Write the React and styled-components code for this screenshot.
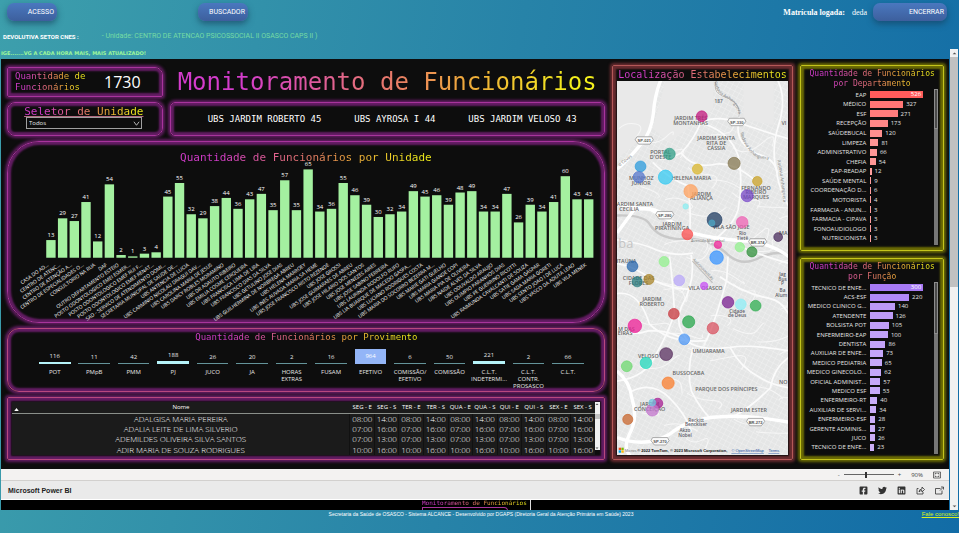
import React from "react";
import styled, { createGlobalStyle } from "styled-components";
import { FaFacebookSquare, FaLinkedin, FaTwitter } from "react-icons/fa";

const SANS = '"Liberation Sans", Arial, sans-serif';
const CONDENSED = 'Roboto, "Liberation Sans", sans-serif';
const UI = '"Open Sans", "Noto Sans", sans-serif';
const MONO = '"DejaVu Sans Mono", monospace';

const GlobalStyle = createGlobalStyle`
  * { box-sizing: border-box; }
  html, body { margin: 0; }
  body {
    min-height: 100vh;
    font-family: ${SANS};
    background: linear-gradient(100deg, #3d9fac 0%, #2783a8 50%, #126ca6 100%);
  }
  button { font: inherit; border: 0; padding: 0; }
`;

const Page = styled.div`
  display: flex;
  flex-direction: column;
  min-height: 100vh;
`;

/* ---------- site header ---------- */

const TopBar = styled.header`
  display: flex;
  align-items: center;
  height: 29px;
  padding: 0 12px 5px 7px;
`;

const PillButton = styled.button`
  width: ${(p) => p.$width}px;
  height: 18px;
  padding-right: 3px;
  border-radius: 7px;
  background: linear-gradient(#4a78bf, #3d5f9d);
  box-shadow: 0 3px 6px rgba(20, 60, 90, 0.6);
  color: #fff;
  font: 7px ${CONDENSED};
  text-align: right;
  cursor: pointer;
`;

const Actions = styled.nav`
  display: flex;
  flex: 1;
  gap: 141px;
`;

const LoggedUser = styled.p`
  display: flex;
  gap: 7px;
  margin: 0 6px 0 0;
  color: #fff;
  font: 8px "Liberation Serif", serif;
`;

const SectorLine = styled.p`
  display: flex;
  align-items: center;
  gap: 23px;
  height: 14px;
  margin: 0;
  padding-left: 3px;
  color: #76dca4;
  font: 7px ${CONDENSED};

  strong { color: #fff; font-size: 6px; }
`;

/* ---------- embedded report ---------- */

const FrameRow = styled.main`
  display: flex;
  margin: 6px 0 0 1px;
`;

const Frame = styled.div`
  flex: 1;
  min-width: 0;
`;

const Ticker = styled.p`
  height: 10px;
  margin: 0;
  color: #9df79a;
  font: bold 5px/8px "DejaVu Sans", sans-serif;
  white-space: nowrap;
  overflow: hidden;
`;

const Report = styled.section`
  display: grid;
  grid-template-columns: 599fr 182fr 144fr;
  gap: 7px;
  padding: 6px 5px 9px 6px;
  background: #0d0d0d;
  color: #e6e6e6;
  font-family: ${UI};
`;

const tones = {
  purple: ["#a8349c", "#641c64"],
  pink: ["#b8487e", "#641c64"],
  red: ["#b45858", "#6a2c30"],
  yellow: ["#c4c41c", "#6c6c04"],
};

const Panel = styled.section`
  display: flex;
  min-width: 0;
  min-height: ${(p) => p.$minHeight || 0}px;
  flex-direction: column;
  border: 1px solid ${(p) => tones[p.$tone][0]};
  border-radius: ${(p) => p.$radius || "2px"};
  box-shadow: 0 0 3px 2px ${(p) => tones[p.$tone][1]},
    inset 0 0 2px 3px ${(p) => tones[p.$tone][1]};
`;

const GradientText = styled.h2`
  width: fit-content;
  margin: 0;
  background: linear-gradient(90deg, #d43ccc 15%, #e8786c 50%, #efa83c 68%, #f4f01c 95%);
  background-clip: text;
  color: transparent;
  font: ${(p) => p.$size}px/${(p) => p.$line || p.$size + 2}px ${MONO};
  text-align: center;
  white-space: nowrap;
`;

const LeftColumn = styled.div`
  display: flex;
  flex-direction: column;
  gap: 5px;
  min-width: 0;
  padding-top: 2px;
`;

const Summary = styled.div`
  display: grid;
  grid-template-columns: 156fr 436fr;
  gap: 5px 7px;
`;

const TotalPanel = styled(Panel)`
  flex-direction: row;
  align-items: center;
  justify-content: space-between;
  padding: 0 21px 0 7px;

  h2 { text-align: left; }
`;

const Total = styled.strong`
  color: #fff;
  font-size: 16px;
  font-weight: 400;
`;

const MainTitle = styled(GradientText)`
  align-self: center;
  justify-self: center;
`;

const SelectorPanel = styled(Panel)`
  align-items: center;
  padding: 3px 20px 0 18px;

  label { text-decoration: underline #b06a80; }
`;

const SelectWrap = styled.div`
  display: grid;
  width: 100%;
  align-items: center;

  > * { grid-area: 1 / 1; }
  svg { justify-self: end; width: 7px; height: 7px; margin-right: 2px; pointer-events: none; }
`;

const UnitSelect = styled.select`
  appearance: none;
  width: 100%;
  height: 12px;
  padding: 0 2px;
  border: 1px solid #a0a0a0;
  border-radius: 0;
  background: #0d0d0d;
  color: #e6e6e6;
  font: 6px ${UI};
`;

const UnitTicker = styled(Panel)`
  flex-direction: row;
  align-items: center;
  justify-content: space-between;
  padding: 0 27px 0 37px;
  color: #fff;
  font: 9px ${MONO};
`;

const ChartPanel = styled(Panel)`
  display: grid;

  > * { grid-area: 1 / 1; }
  > h2 { justify-self: center; margin-top: 9px; }
  > svg { display: block; width: 100%; height: auto; font-family: ${UI}; }
`;

const ProvisionPanel = styled(Panel)`
  align-items: center;
  padding: 2px 16px 0 27px;
`;

const ProvisionTitle = styled(GradientText)`
  margin-right: 10px;
`;

const ProvisionGrid = styled.div`
  display: grid;
  grid-template-columns: repeat(14, 1fr);
  width: 100%;
`;

const Provision = styled.div`
  display: flex;
  flex-direction: column;
  align-items: center;
  font-size: 6px;
  line-height: 7px;
  text-align: center;
`;

const ProvisionPlot = styled.div`
  display: flex;
  width: 100%;
  height: 21px;
  flex-direction: column;
  justify-content: flex-end;
  align-items: center;
  gap: 2px;
`;

const ProvisionBar = styled.span`
  display: grid;
  place-items: center;
  width: 80%;
  background: ${(p) => (p.$tone === "full" ? "#93b5f7" : p.$tone === "light" ? "#b5f2f8" : "#64949a")};
  color: #fff;
`;

const ProvisionName = styled.span`
  width: 36px;
  margin-top: 5px;
`;

const TablePanel = styled(Panel)`
  flex-direction: row;
  align-items: stretch;
  padding: 4px;
`;

const Schedule = styled.table`
  flex: 1;
  border-collapse: collapse;
  table-layout: fixed;
  background: #1b1b1b;
  color: #fff;
  font-size: 8px;
  font-weight: 300;
  text-align: center;

  th {
    height: 12px;
    padding: 0;
    border-bottom: 1px solid #8a8f8a;
    font-size: 6px;
    font-weight: 400;
    line-height: 8px;
  }
  th:first-child { width: 58%; }
  td { height: 10px; padding: 0; line-height: 10px; }
  td + td { border-left: 1px solid #111; }
`;

const NameHead = styled.div`
  display: grid;
  grid-template-columns: 8px 1fr 8px;
  align-items: end;

  svg { width: 5px; margin-left: 2px; }
`;

const MiniScroll = styled.div`
  display: flex;
  flex-direction: column;
  justify-content: space-between;
  align-items: center;
  width: 5px;
  margin-bottom: 5px;
  background: linear-gradient(#f1f1f1 12px, #c1c1c1 12px, #c1c1c1 17px, #f1f1f1 17px);

  svg { width: 4px; }
`;

const MapPanel = styled(Panel)`
  padding: 3px 4px 4px;
  align-items: center;

  svg { display: block; width: 100%; height: 374px; }
`;

const RightColumn = styled.div`
  display: flex;
  flex-direction: column;
  gap: 7px;
  min-width: 0;
`;

const RankPanel = styled(Panel)`
  align-items: center;
  padding: 3px 5px 5px;
`;

const RankBody = styled.div`
  display: flex;
  width: 100%;
  height: ${(p) => p.$height}px;
`;

const RankRows = styled.ol`
  display: flex;
  flex: 1;
  flex-direction: column;
  margin: 0;
  padding: 1px 0 2px;
  list-style: none;
`;

const RankRow = styled.li`
  display: grid;
  flex: 1;
  grid-template-columns: 60px 1fr;
  gap: 4px;
  align-items: center;
  min-height: 0;
  font-size: 6px;
  line-height: 8px;
  text-align: right;
  white-space: nowrap;
`;

const RankMeter = styled.span`
  display: flex;
  align-items: center;
  gap: 3px;
`;

const RankBar = styled.span`
  height: 7px;
  padding-right: ${(p) => (p.$labelled ? 2 : 0)}px;
  background: ${(p) => p.$color};
  color: #fff;
  line-height: 7px;
`;

const RankTrack = styled.div`
  width: 4px;
  background: #767676;

  &::before {
    content: "";
    display: block;
    height: ${(p) => p.$thumb}px;
    border: 1px solid #8c8c8c;
    background: #4a4a4a;
  }
`;

const StatusBar = styled.div`
  display: flex;
  align-items: center;
  justify-content: flex-end;
  gap: 4px;
  height: 12px;
  padding-right: 8px;
  border-bottom: 1px solid #d2d0ce;
  background: #f3f2f1;
  color: #444;
  font: 6px ${UI};

  svg { width: 8px; height: 8px; margin-left: 6px; }
  output { margin-left: 6px; }
`;

const ZoomRange = styled.input`
  appearance: none;
  width: 50px;
  height: 7px;
  margin: 0;
  background: linear-gradient(#666, #666) center / 100% 1px no-repeat;

  &::-webkit-slider-thumb { appearance: none; width: 2px; height: 6px; background: #333; }
`;

const BrandBar = styled.div`
  display: flex;
  align-items: center;
  justify-content: space-between;
  height: 18px;
  padding: 0 5px 0 7px;
  background: #eaeaea;
  color: #222;
  font: bold 7px ${SANS};
`;

const ShareList = styled.div`
  display: flex;
  gap: 10px;

  button { display: grid; width: 9px; height: 9px; background: none; color: #333; }
  svg { width: 9px; height: 9px; }
`;

const NextReport = styled.div`
  display: flex;
  justify-content: center;
  height: 11px;
  border-top: 1px solid #fff;
  background: #000;
`;

const Preview = styled.div`
  width: 112px;
  padding-left: 3px;
  border-right: 1px solid #ddd;
  overflow: hidden;
`;

const PreviewBox = styled.div`
  height: 4px;
  width: 86px;
  margin-top: 1px;
  border: 1px solid #a8349c;
  border-radius: 0 4px 0 0;
`;

const PageScroll = styled.div`
  display: flex;
  flex-direction: column;
  align-items: center;
  width: 8px;
  margin: 0 1px;
  background: #f1f1f1;

  svg { width: 5px; height: 8px; }
  &::before { content: ""; order: 1; width: 100%; height: 230px; background: #c1c1c1; }
  svg:last-child { order: 2; margin-top: auto; }
`;

const Footer = styled.footer`
  display: grid;
  grid-template-columns: 1fr auto 1fr;
  padding: 0 0 0 3px;
  color: #fff;
  font-size: 5px;
  line-height: 8px;

  a { grid-column: 3; justify-self: end; color: #d8f020; font-size: 6px; }
  span { grid-column: 2; }
`;

/* ---------- data ---------- */

const units = [
  [13, "CASA DO AD..."], [29, "CENTRO DE ATENC..."], [27, "CENTRO DE ATENÇÃO A..."],
  [41, "CENTRO DE ESPECIALIDADES O..."], [12, "CONSULTORIO NA RUA"], [54, "DAF"],
  [2, "OUTRO DEPARTAMENTO ESTEIO"], [1, "POSTO ODONTOLOGICO EMEI ESMER..."],
  [3, "POSTO ODONTOLOGICO EMEF RUI F..."], [4, "POSTO ODONTOLOGICO EMEF RENAT..."],
  [45, "SAD - SERVICO DE ATENDIMENTO DOMI..."], [55, "SECRETARIA MUNICIPAL DE SAUDE DE..."],
  [32, "UBS ANTENCIA DE LUCIA"], [29, "UBS CARMINIO NICOLAU DRAGUI DAV..."],
  [38, "UBS CAROLINA MARIA DE JESUS"], [44, "UBS DARCY ROBLES MORAMINO"],
  [36, "UBS DR ADAUTO RIBEIRO"], [43, "UBS EMILIA COSME CERQUEIRA"],
  [47, "UBS FRANCISCA LIMA DE LIRA"], [35, "UBS FRANCISCO DIAS DA SILVA"],
  [57, "UBS GETULINO JOSE DIAS"], [35, "UBS GUILHERMINA DE NORBREGA ABREU"],
  [65, "UBS HELENA MARROEY"], [34, "UBS INES AUVADA MARIA SA HEME"],
  [36, "UBS JOSE FRANCISCO RISTO REZENDE"], [55, "UBS JOSE GROSSI"],
  [46, "UBS JOSE GUIMARAES DE ABREU"], [39, "UBS JOSE HILARIO DOS SANTOS"],
  [30, "UBS JOSE MENEZES AIRES"], [32, "UBS JOSE SABINO FERREIRA"],
  [34, "UBS LAURINDA RODOLFO RUFO"], [49, "UBS LIA BUARQUE DE MACEDO GASPA..."],
  [45, "UBS LUCIANO RODRIGUES COSTA"], [46, "UBS MARIA DO SOCORRO BEZERRA M..."],
  [39, "UBS MARIE GATI GUELHO"], [48, "UBS MARIA GIANDE COPI"],
  [49, "UBS MARIA PIA DE OLIVEIRA"], [34, "UBS NAIDE ALVES DA SILVA"],
  [34, "UBS ODUVALDO ARAUJO"], [47, "UBS OLIMPIO PARANHOS DIAS"],
  [26, "UBS PE GUERRINO RICOTTI"], [39, "UBS RAIMUNDA CAVALCANTI DE SOUZA"],
  [34, "UBS SATIE GAMA GASPAR"], [41, "UBS SADA MARIA GORETI"],
  [60, "UBS SENTO JOAO I DE LUCA"], [43, "UBS VASCO DA ADUTA LEAO"], [43, "UBS VILA MENEK"],
];

const provisions = [
  [116, "POT", 2, "light"], [11, "PMpB", 1], [42, "PMM", 1], [188, "PJ", 3, "light"],
  [26, "JUCO", 1], [20, "JA", 1], [2, "HORAS EXTRAS", 1], [16, "FUSAM", 1],
  [964, "EFETIVO", 15, "full"], [6, "COMISSÃO/ EFETIVO", 1], [50, "COMISSÃO", 1],
  [221, "C.L.T. INDETERMI...", 3, "light"], [2, "C.L.T. CONTR. PROSASCO", 1], [66, "C.L.T.", 1],
];

const days = ["SEG - E", "SEG - S", "TER - E", "TER - S", "QUA - E", "QUA - S", "QUI - E", "QUI - S", "SEX - E", "SEX - S"];
const people = [
  ["ADALGISA MARIA PEREIRA", "08:00", "14:00"],
  ["ADALIA LEITE DE LIMA SILVERIO", "07:00", "16:00"],
  ["ADEMILDES OLIVEIRA SILVA SANTOS", "07:00", "13:00"],
  ["ADIR MARIA DE SOUZA RODRIGUES", "10:00", "16:00"],
];

const departments = [
  ["EAP", 526], ["MÉDICO", 327], ["ESF", 271], ["RECEPÇÃO", 173], ["SAÚDEBUCAL", 120],
  ["LIMPEZA", 81], ["ADMINISTRATIVO", 66], ["CHEFIA", 54], ["EAP-READAP", 12],
  ["SAÚDE MENTAL", 9], ["COORDENAÇÃO D...", 6], ["MOTORISTA", 4], ["FARMACIA - ANUN...", 3],
  ["FARMACIA - CIPAVA", 3], ["FONOAUDIOLOGO", 3], ["NUTRICIONISTA", 3],
];

const roles = [
  ["TECNICO DE ENFE...", 300], ["ACS-ESF", 220], ["MEDICO CLINICO G...", 140], ["ATENDENTE", 126],
  ["BOLSISTA POT", 105], ["ENFERMEIRO-EAP", 100], ["DENTISTA", 86], ["AUXILIAR DE ENFE...", 73],
  ["MEDICO PEDIATRIA", 65], ["MEDICO GINECOLO...", 62], ["OFICIAL ADMINIST...", 57],
  ["MEDICO ESF", 53], ["ENFERMEIRO-RT", 40], ["AUXILIAR DE SERVI...", 34],
  ["ENFERMEIRO-ESF", 28], ["GERENTE ADMINIS...", 27], ["JUCO", 26], ["TECNICO DE ENFE...", 23],
];

const mapDots = [
  [276, 173, 16, "#c2187e"], [180, 285, 17, "#2f9d86"], [94, 322, 16, "#2b9bdc"], [89, 354, 17, "#5577cc"],
  [168, 354, 21, "#35c9f2"], [263, 330, 15, "#d9b62c"], [372, 313, 18, "#857851"], [441, 366, 14, "#c9a227"],
  [411, 409, 18, "#7748c8"], [243, 396, 20, "#ffa05c"], [228, 441, 8, "#8ceef2"], [314, 481, 22, "#1f3c62"],
  [306, 490, 9, "#4ea6c4"], [396, 488, 17, "#ee62b4"], [233, 524, 16, "#fa4c4c"], [503, 532, 13, "#4b2e5e"],
  [324, 555, 11, "#f0289a"], [389, 562, 14, "#92f08e"], [425, 576, 15, "#2f8f3a"], [320, 593, 20, "#3894ff"],
  [70, 619, 16, "#2464ac"], [164, 605, 15, "#92f08e"], [84, 665, 15, "#257a7c"], [119, 658, 15, "#a88428"],
  [209, 661, 16, "#b9a8fa"], [283, 677, 11, "#c850f4"], [354, 726, 17, "#7a2090"], [392, 732, 16, "#8eeef5"],
  [436, 736, 16, "#2fae50"], [193, 760, 16, "#c8383e"], [237, 784, 18, "#26a64a"], [77, 796, 20, "#ee1d96"],
  [309, 803, 17, "#d85260"], [224, 836, 16, "#4c96f4"], [170, 880, 19, "#5a3060"], [110, 906, 17, "#22d8bc"],
  [53, 916, 16, "#6cd86e"], [176, 966, 18, "#fa7e2c"], [145, 1026, 15, "#a61e92"], [129, 1046, 18, "#c274cc"],
  [129, 1024, 10, "#72c4dc"], [56, 1074, 15, "#c8652c"],
];

const mapLabels = [
  [243, 185, "JARDIM TRÊS"], [243, 198, "MONTANHAS"], [319, 245, "JARDIM SANTA"], [319, 259, "RITA DE"],
  [319, 273, "CÁSSIA"], [153, 285, "PORTAL"], [153, 299, "D'OESTE"], [96, 363, "MUNHOZ"], [96, 377, "JÚNIOR"],
  [245, 361, "HELENA MARIA"], [437, 391, "FERNANDO"], [437, 405, "RIBEIRO"], [437, 419, "MARQUES"],
  [275, 409, "JARDIM"], [275, 423, "ALIANÇA"], [75, 441, "JARDIM SANTA"], [60, 455, "CECÍLIA"],
  [188, 498, "JARDIM"], [188, 512, "PIRATININGA"], [363, 508, "VILA SÃO JOSÉ"], [518, 525, "MA"],
  [52, 610, "ITAÚNA"], [88, 661, "CIDADE DAS"], [88, 675, "FLORES"], [287, 690, "VILA OSASCO"], [128, 722, "JARDIM"],
  [128, 736, "ROBERTO"], [52, 810, "M DAS"], [48, 824, "EIRAS"], [296, 876, "UMUARAMA"], [117, 892, "VELOSO"],
  [236, 941, "BUSSOCABA"], [349, 990, "PARQUE DOS PRÍNCIPES"], [121, 1035, "JARDIM"], [121, 1048, "CONCEIÇÃO"],
  [416, 1052, "JARDIM ESTER"], [518, 969, "NO"], [520, 199, "VI"],
];

const placeLabels = [
  [326, 134, "187"], [397, 525, "Rio"], [397, 541, "Tietê"], [381, 757, "Cidade"], [381, 771, "de Deus"],
  [259, 1081, "Reckitt"], [259, 1094, "Benckiser"], [226, 1111, "Akzo"], [226, 1125, "Nobel"],
  [516, 648, "Jag"], [516, 662, "Bus"], [516, 676, "P"], [516, 696, "Ba"], [512, 709, "Alum"],
];

const roadShields = [[105, 245, "SP-021"], [380, 190, "SP-330"], [166, 467, "SP-280"], [442, 548, "BR-374"], [436, 1082, "BR-272"], [152, 1139, "SP-270"]];

const majorRoads = [
  "M155 63 Q136 110 132 165 Q126 220 96 255 Q50 310 24 330",
  "M24 432 Q80 450 120 448 Q180 480 230 516 Q320 540 420 545 Q490 555 534 590",
  "M24 930 Q62 960 68 1010 Q88 1070 60 1120 Q40 1160 66 1185",
  "M24 1128 Q110 1160 180 1118 Q240 1070 330 1066 Q410 1060 534 1082",
  "M24 520 Q50 485 75 450 Q130 440 166 467",
];
const roads = [
  "M320 63 Q306 100 336 112 Q395 130 386 190 Q372 250 440 285 Q500 300 500 350 Q510 400 534 440",
  "M276 190 Q320 170 380 190 Q450 215 534 240", "M276 185 Q255 240 215 282 Q180 300 150 300",
  "M280 195 Q360 220 384 290 Q400 360 384 450 Q370 500 300 550", "M215 282 Q250 330 320 315 Q370 310 430 360",
  "M130 310 Q180 360 235 380 Q245 460 240 520", "M24 540 Q100 550 140 570 Q200 590 250 580",
  "M244 585 Q260 660 215 740 Q190 800 245 850 Q290 870 360 860 Q420 850 534 870",
  "M180 590 Q190 660 195 760 Q170 830 140 880 Q110 950 24 960", "M24 700 Q90 690 120 790 Q180 850 290 840 Q320 770 350 660 L354 590",
  "M330 650 Q400 700 480 715 Q510 720 534 760", "M534 890 Q490 920 480 980 Q420 1040 370 1065",
  "M250 860 Q230 930 245 990 Q270 1040 300 1070", "M68 990 Q130 960 180 1010 Q230 1060 245 1110",
  "M500 63 Q530 120 504 200 Q480 280 500 340", "M390 560 Q460 590 534 610", "M24 610 Q80 620 130 660 Q220 700 270 680",
  "M360 860 Q390 920 450 950 Q480 970 534 980", "M24 800 Q60 830 120 810 Q200 810 240 850",
];
const minorRoads = Array.from({ length: 44 }, (_, i) => {
  const x = 30 + ((i * 137) % 480);
  const y = 210 + ((i * 211) % 940);
  return `M${x} ${y} q${20 + (i % 5) * 9} ${-20 + (i % 7) * 8} ${50 + (i % 4) * 12} ${(i % 3) * 18 - 14} t${(i % 4) * 10} ${40 - (i % 5) * 15}`;
});

/* ---------- parts ---------- */

function UnitChart() {
  const step = 539 / 46;
  return (
    <svg viewBox="0 0 597 180" role="img" aria-label="Funcionários por unidade">
      {units.map(([value, name], i) => {
        const x = 43 + i * step;
        const h = value * 1.362;
        return (
          <g key={name}>
            <rect x={x - 4.7} y={116 - h} width="9.4" height={h} fill="#a4f0a0" />
            <text x={x} y={113 - h} fontSize="6" fill="#fff" textAnchor="middle">{value}</text>
            <text transform={`translate(${x - 2} 124) rotate(-35)`} fontSize="5" fill="#fff" textAnchor="end">{name}</text>
          </g>
        );
      })}
    </svg>
  );
}

function CityMap() {
  return (
    <svg viewBox="24 63 510 1122" preserveAspectRatio="xMidYMid slice" role="img" aria-label="Mapa de Osasco">
      <defs>
        <pattern id="blocks" width="15" height="15" patternUnits="userSpaceOnUse" patternTransform="rotate(28)">
          <path d="M0 0H15M0 0V15" stroke="#f5f5f5" strokeWidth="2" />
        </pattern>
        <path id="anhanguera" d="M312 70 Q318 105 350 120 Q382 135 390 185" />
        <path id="anhangueraSouth" d="M390 222 Q405 275 440 295 Q465 303 500 303" />
        <path id="anhangueraEast" d="M500 304 Q510 340 520 440" />
        <path id="autonomistas" d="M248 600 L318 672" />
      </defs>
      <rect x="24" y="63" width="510" height="1122" fill="#e5e6e6" />
      <rect x="24" y="63" width="510" height="1122" fill="url(#blocks)" />
      <path d="M24 63H145Q128 150 120 220L24 300ZM170 63H310V150L180 250L130 210Z M400 63H490V200L400 180Z" fill="#e9e9e9" />
      <path d="M24 468 Q100 465 120 492 Q145 535 210 538 Q300 530 360 590 Q400 620 450 592 Q500 570 534 586" fill="none" stroke="#c9c9c9" strokeWidth="7" />
      <g fill="none" stroke="#f6f6f6" strokeWidth="3">{minorRoads.map((d) => <path key={d} d={d} />)}</g>
      <g fill="none" stroke="#fbfbfb" strokeWidth="5">{roads.map((d) => <path key={d} d={d} />)}</g>
      <g fill="none" stroke="#fff" strokeWidth="10">{majorRoads.map((d) => <path key={d} d={d} />)}</g>
      <path d="M320 63 Q306 100 336 112 Q395 130 386 175M248 604L308 668" fill="none" stroke="#bdbdbd" strokeWidth="3" />
      <text x="28" y="566" fontSize="38" fill="#c4c4c4" fontFamily={UI}>ba</text>
      <g fontFamily={UI} fontSize="13" fill="#7a7a7a">
        <text><textPath href="#anhanguera">Rodovia Anhanguera</textPath></text>
        <text><textPath href="#anhangueraSouth">Rodovia Anhanguera</textPath></text>
        <text><textPath href="#anhangueraEast">Rodovia Anhanguera</textPath></text>
        <text><textPath href="#autonomistas">Autonomistas</textPath></text>
        <text transform="translate(32 322) rotate(-38)">o Covas</text>
        <text transform="translate(244 548)" fontSize="12">Avenida Marechal</text>
      </g>
      <g fontFamily={UI} fontSize="16" fontWeight="600" fill="#666" textAnchor="middle">
        {mapLabels.map(([x, y, label]) => <text key={`${x}-${y}`} x={x} y={y}>{label}</text>)}
        {placeLabels.map(([x, y, label]) => <text key={`${x}-${y}`} x={x} y={y} fill="#5e5e68" fontSize="14">{label}</text>)}
      </g>
      {roadShields.map(([x, y, label]) => (
        <g key={label}>
          <path d={`M${x - 22} ${y - 11}H${x + 22}L${x + 27} ${y - 2}L${x + 17} ${y + 11}H${x - 17}L${x - 27} ${y - 2}Z`} fill="#fafafa" stroke="#888" strokeWidth="2" />
          <text x={x} y={y + 5} fontFamily={SANS} fontSize="12" fontWeight="700" fill="#555" textAnchor="middle">{label}</text>
        </g>
      ))}
      {mapDots.map(([x, y, r, fill]) => (
        <circle key={`${x}-${y}`} cx={x} cy={y} r={r} fill={fill} fillOpacity="0.75" stroke={fill} strokeWidth="2" />
      ))}
      <g>
        <path d="M29 1158h7v7h-7z" fill="#f25022" /><path d="M37 1158h7v7h-7z" fill="#7fba00" />
        <path d="M29 1166h7v7h-7z" fill="#00a4ef" /><path d="M37 1166h7v7h-7z" fill="#ffb900" />
      </g>
      <g fontFamily={SANS} fontSize="12">
        <text x="47" y="1171" fill="#777">Micros</text>
        <text x="84" y="1171" fill="#111" fontWeight="700">© 2022 TomTom, © 2023 Microsoft Corporation,</text>
        <a href="#osm"><text x="364" y="1171" fill="#1a4fa0" textDecoration="underline">© OpenStreetMap</text></a>
        <a href="#termos"><text x="474" y="1171" fill="#1a4fa0" textDecoration="underline">Terms</text></a>
      </g>
    </svg>
  );
}

function Ranking({ title, rows, max, color, height, thumb }) {
  return (
    <RankPanel $tone="yellow">
      <GradientText $size={8} $line={10}>{title[0]}<br />{title[1]}</GradientText>
      <RankBody $height={height}>
        <RankRows>
          {rows.map(([name, value], i) => (
            <RankRow key={`${name}-${value}`}>
              <span>{name}</span>
              <RankMeter>
                <RankBar $labelled={i === 0} $color={color(value / max)} style={{ width: `${Math.max(1, (value / max) * 83)}%` }}>
                  {i === 0 && value}
                </RankBar>
                {i > 0 && value}
              </RankMeter>
            </RankRow>
          ))}
        </RankRows>
        <RankTrack $thumb={thumb} />
      </RankBody>
    </RankPanel>
  );
}

const Arrow = ({ down }) => (
  <svg viewBox="0 0 8 8" aria-hidden="true">
    <path d={down ? "M1 3h6L4 6Z" : "M1 6h6L4 3Z"} fill="#555" />
  </svg>
);

export default function App() {
  return (
    <Page>
      <GlobalStyle />
      <TopBar>
        <Actions>
          <PillButton $width={50}>ACESSO</PillButton>
          <PillButton $width={50}>BUSCADOR</PillButton>
        </Actions>
        <LoggedUser><strong>Matrícula logada:</strong><span>deda</span></LoggedUser>
        <PillButton $width={74}>ENCERRAR</PillButton>
      </TopBar>
      <SectorLine>
        <strong>DEVOLUTIVA SETOR CNES :</strong>
        <span>- Unidade: CENTRO DE ATENCAO PSICOSSOCIAL II OSASCO CAPS II )</span>
      </SectorLine>

      <FrameRow>
        <Frame>
          <Ticker>IGE.......VG A CADA HORA MAIS, MAIS ATUALIZADO!</Ticker>
          <Report>
            <LeftColumn>
              <Summary>
                <TotalPanel $tone="purple" $radius="2px 8px 2px 2px" $minHeight={30}>
                  <GradientText $size={9} $line={11}>Quantidade de<br />Funcionários</GradientText>
                  <Total>1730</Total>
                </TotalPanel>
                <MainTitle as="h1" $size={24} $line={28}>Monitoramento de Funcionários</MainTitle>
                <SelectorPanel $tone="purple" $radius="8px" $minHeight={34}>
                  <GradientText as="label" htmlFor="unit" $size={11} $line={11}>Seletor de Unidade</GradientText>
                  <SelectWrap>
                    <UnitSelect id="unit" defaultValue="Todos"><option>Todos</option></UnitSelect>
                    <svg viewBox="0 0 8 8" fill="none" stroke="#ccc" aria-hidden="true"><path d="M1 2l3 4 3-4" /></svg>
                  </SelectWrap>
                </SelectorPanel>
                <UnitTicker $tone="purple" $radius="5px">
                  <span>UBS JARDIM ROBERTO 45</span>
                  <span>UBS AYROSA I 44</span>
                  <span>UBS JARDIM VELOSO 43</span>
                </UnitTicker>
              </Summary>

              <ChartPanel $tone="purple" $radius="32px">
                <GradientText $size={11}>Quantidade de Funcionários por Unidade</GradientText>
                <UnitChart />
              </ChartPanel>

              <ProvisionPanel $tone="pink" $radius="12px" $minHeight={64}>
                <ProvisionTitle $size={9} $line={12}>Quantidade de Funcionários por Provimento</ProvisionTitle>
                <ProvisionGrid>
                  {provisions.map(([value, name, height, tone]) => (
                    <Provision key={name}>
                      <ProvisionPlot>
                        {tone !== "full" && <span>{value}</span>}
                        <ProvisionBar $tone={tone} style={{ height }}>{tone === "full" && value}</ProvisionBar>
                      </ProvisionPlot>
                      <ProvisionName>{name}</ProvisionName>
                    </Provision>
                  ))}
                </ProvisionGrid>
              </ProvisionPanel>

              <TablePanel $tone="pink" $minHeight={63}>
                <Schedule>
                  <thead>
                    <tr>
                      <th scope="col">
                        <NameHead>
                          <svg viewBox="0 0 6 4" aria-hidden="true"><path d="M0 4h6L3 0Z" fill="#fff" /></svg>
                          Nome
                        </NameHead>
                      </th>
                      {days.map((day) => <th scope="col" key={day}>{day}</th>)}
                    </tr>
                  </thead>
                  <tbody>
                    {people.map(([name, start, end]) => (
                      <tr key={name}>
                        <td>{name}</td>
                        {days.map((day, i) => <td key={day}>{i % 2 ? end : start}</td>)}
                      </tr>
                    ))}
                  </tbody>
                </Schedule>
                <MiniScroll><Arrow /><Arrow down /></MiniScroll>
              </TablePanel>
            </LeftColumn>

            <MapPanel $tone="red">
              <GradientText $size={10} $line={12}>Localização Estabelecimentos</GradientText>
              <CityMap />
            </MapPanel>

            <RightColumn>
              <Ranking
                title={["Quantidade de Funcionários", "por Departamento"]}
                rows={departments} max={526} height={156} thumb={38}
                color={(t) => `hsl(0, 100%, ${81 - t * 13}%)`}
              />
              <Ranking
                title={["Quantidade de Funcionários", "por Função"]}
                rows={roles} max={300} height={172} thumb={50}
                color={(t) => `hsl(262, 86%, ${84 - t * 12}%)`}
              />
            </RightColumn>
          </Report>

          <StatusBar>
            <span>-</span>
            <ZoomRange type="range" aria-label="Zoom" min="0" max="200" defaultValue="90" />
            <span>+</span>
            <output>90%</output>
            <svg viewBox="0 0 16 16" fill="none" stroke="#444" strokeWidth="1.5" aria-hidden="true">
              <path d="M1 2h14v12H1ZM4 7V5h3M9 5h3v2M12 9v2H9M7 11H4V9" />
            </svg>
          </StatusBar>
          <BrandBar>
            <span>Microsoft Power BI</span>
            <ShareList>
              <button aria-label="Facebook"><FaFacebookSquare /></button>
              <button aria-label="Twitter"><FaTwitter /></button>
              <button aria-label="LinkedIn"><FaLinkedin /></button>
              <button aria-label="Compartilhar">
                <svg viewBox="0 0 18 18" fill="none" stroke="currentColor" strokeWidth="1.6">
                  <path d="M5 5H2v11h12v-4M6 12q0-6 6-6V2l5 5-5 5V9Q8 9 6 12Z" />
                </svg>
              </button>
              <button aria-label="Tela inteira">
                <svg viewBox="0 0 18 18" fill="none" stroke="currentColor" strokeWidth="1.6">
                  <path d="M11 5H1v11h13V9M10 9l6-6M12 2h5v5" />
                </svg>
              </button>
            </ShareList>
          </BrandBar>
          <NextReport>
            <Preview>
              <GradientText as="p" $size={6} $line={6}>Monitoramento de Funcionários</GradientText>
              <PreviewBox />
            </Preview>
          </NextReport>
        </Frame>
        <PageScroll><Arrow /><Arrow down /></PageScroll>
      </FrameRow>

      <Footer>
        <span>Secretaria da Saúde de OSASCO - Sistema ALCANCE - Desenvolvido por DGAPS (Diretoria Geral da Atenção Primária em Saúde) 2023</span>
        <a href="#contato">Fale conosco!</a>
      </Footer>
    </Page>
  );
}
